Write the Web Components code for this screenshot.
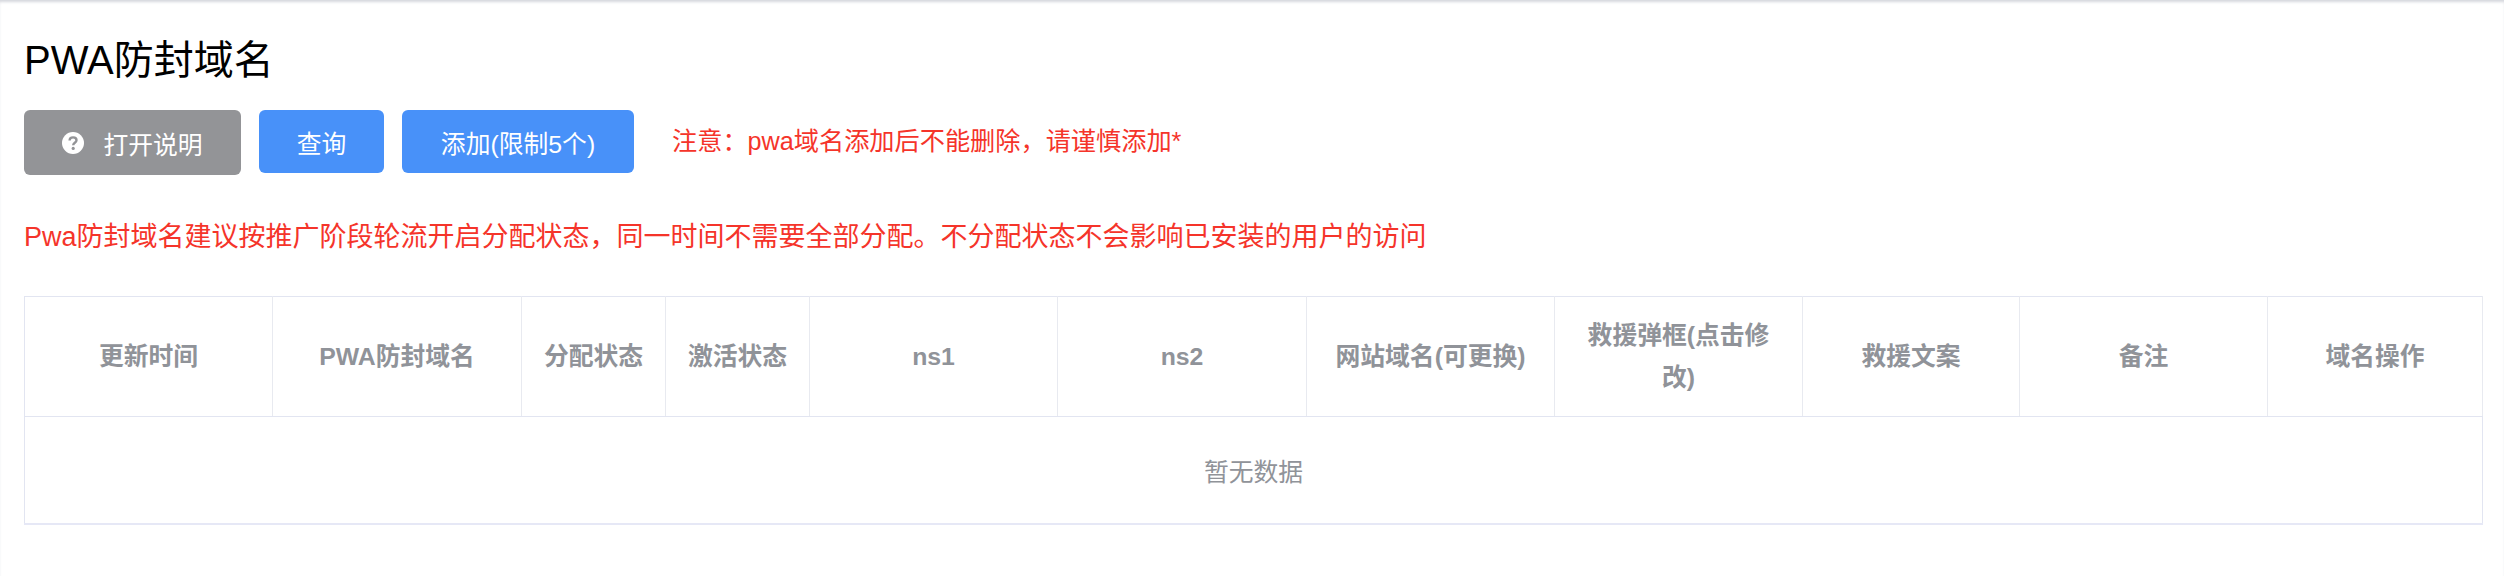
<!DOCTYPE html>
<html lang="zh">
<head>
<meta charset="utf-8">
<title>PWA防封域名</title>
<style>
  html, body { margin: 0; background: #fff; }
  body { font-family: "Liberation Sans", "Noto Sans CJK SC", sans-serif; }
</style>
</head>
<body>
<pwa-page>
  <span slot="title">PWA防封域名</span>
  <ui-button slot="actions" type="gray" icon="question">打开说明</ui-button>
  <ui-button slot="actions" style="--btn-width:125px">查询</ui-button>
  <ui-button slot="actions" style="--btn-width:232px">添加(限制5个)</ui-button>
  <span slot="notice">注意：pwa域名添加后不能删除，请谨慎添加*</span>
  <span slot="tip">Pwa防封域名建议按推广阶段轮流开启分配状态，同一时间不需要全部分配。不分配状态不会影响已安装的用户的访问</span>
  <domain-table slot="table"></domain-table>
</pwa-page>

<script>
class UiButton extends HTMLElement {
  constructor() {
    super();
    const shadow = this.attachShadow({ mode: "open" });
    const gray = this.getAttribute("type") === "gray";
    const icon = this.getAttribute("icon") === "question"
      ? `<svg viewBox="0 0 22 22" width="22" height="22">
           <circle cx="11" cy="11" r="11" fill="#fff"/>
           <path d="M7.6 8.6c0-2 1.5-3.2 3.5-3.2s3.4 1.2 3.4 2.9c0 2.4-3.3 2.6-3.3 4.9" fill="none" stroke="#939497" stroke-width="2.4"/>
           <circle cx="11.2" cy="16.4" r="1.6" fill="#939497"/>
         </svg>`
      : "";
    shadow.innerHTML = `
      <style>
        :host {
          display: block;
          width: var(--btn-width, 217px);
          height: ${gray ? 65 : 63}px;
          font-size: 24.8px;
          color: #fff;
        }
        button {
          width: 100%;
          height: 100%;
          display: flex;
          align-items: center;
          justify-content: center;
          gap: 19px;
          padding: 0;
          border: none;
          border-radius: 6px;
          font: inherit;
          color: inherit;
          background: ${gray ? "#939497" : "#4891f9"};
        }
        svg { flex: none; }
      </style>
      <button>${icon}<slot></slot></button>
    `;
  }
}

class DomainTable extends HTMLElement {
  constructor() {
    super();
    const shadow = this.attachShadow({ mode: "open" });
    const cols = [
      ["更新时间", 248], ["PWA防封域名", 249], ["分配状态", 144], ["激活状态", 144],
      ["ns1", 248], ["ns2", 249], ["网站域名(可更换)", 248], ["救援弹框(点击修改)", 248],
      ["救援文案", 217], ["备注", 248], ["域名操作", 215]
    ];
    shadow.innerHTML = `
      <style>
        :host { display: block; width: 2458px; }
        table {
          width: 100%;
          table-layout: fixed;
          border-collapse: collapse;
          font-size: 24.8px;
          border: 1px solid #e2e5f1;
          border-bottom: 2px solid #e6e8f6;
        }
        th {
          height: 120px;
          padding: 0 20px;
          box-sizing: border-box;
          font-weight: 700;
          line-height: 42px;
          color: #909399;
          border-right: 1px solid #e8eaf0;
          border-bottom: 1px solid #e2e5f1;
        }
        td {
          height: 106px;
          padding: 0;
          text-align: center;
          color: #909399;
        }
      </style>
      <table>
        <colgroup>${cols.map(c => `<col style="width:${c[1]}px">`).join("")}</colgroup>
        <thead><tr>${cols.map(c => `<th>${c[0]}</th>`).join("")}</tr></thead>
        <tbody><tr><td colspan="${cols.length}">暂无数据</td></tr></tbody>
      </table>
    `;
  }
}

class PwaPage extends HTMLElement {
  constructor() {
    super();
    const shadow = this.attachShadow({ mode: "open" });
    shadow.innerHTML = `
      <style>
        :host {
          display: block;
          height: 576px;
          box-sizing: border-box;
          padding: 40px 24px 0;
          box-shadow: inset 0 3px 3px -1px #d5d7dd;
        }
        h1 {
          margin: 0 0 30px;
          height: 40px;
          line-height: 40px;
          font-size: 40px;
          font-weight: 400;
          color: #000;
        }
        .bar {
          display: flex;
          align-items: flex-start;
          gap: 18px;
        }
        .notice {
          margin-left: 20px;
          line-height: 63px;
          font-size: 25.2px;
          color: #f5342a;
        }
        .tip {
          margin: 41px 0 0;
          line-height: 42px;
          font-size: 27px;
          color: #f5342a;
        }
        .table { margin-top: 38px; }
      </style>
      <h1><slot name="title"></slot></h1>
      <div class="bar">
        <slot name="actions"></slot>
        <div class="notice"><slot name="notice"></slot></div>
      </div>
      <div class="tip"><slot name="tip"></slot></div>
      <div class="table"><slot name="table"></slot></div>
    `;
  }
}

customElements.define("ui-button", UiButton);
customElements.define("domain-table", DomainTable);
customElements.define("pwa-page", PwaPage);
</script>
</body>
</html>
